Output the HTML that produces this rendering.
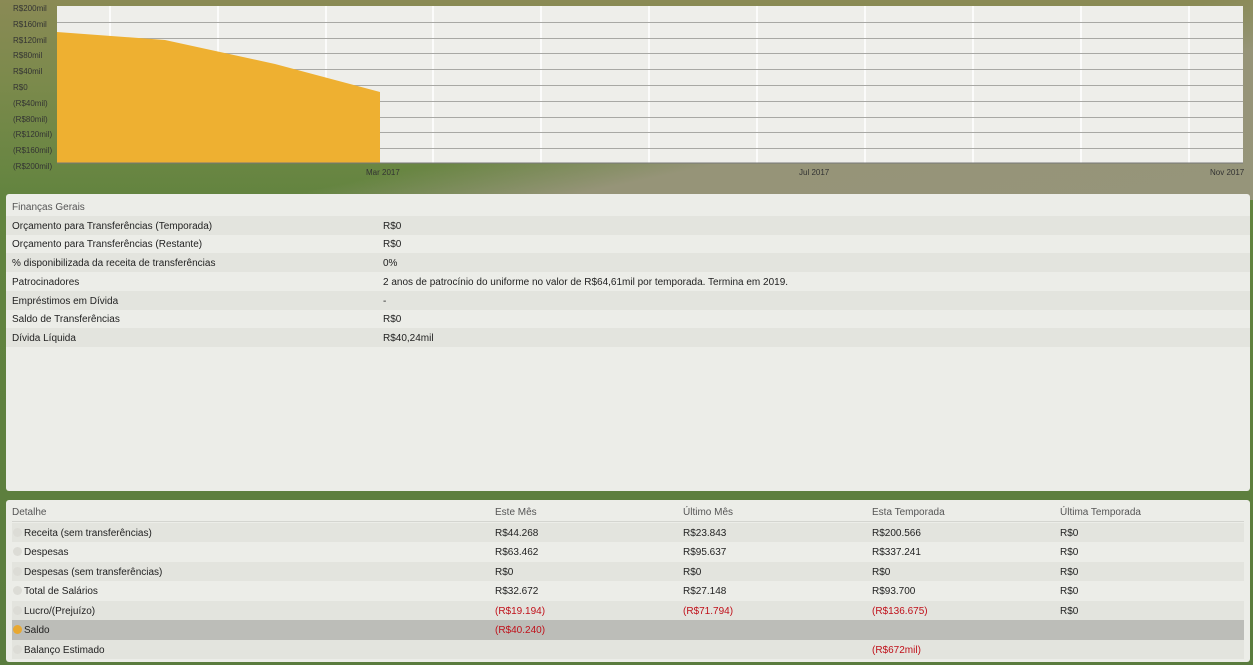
<!DOCTYPE html><html><head><meta charset="utf-8"><style>
body{margin:0;width:1253px;height:665px;overflow:hidden;font-family:"Liberation Sans",sans-serif;font-size:10px;color:#222;
background:linear-gradient(180deg,#8a8a55 0%,#7c8a4c 12%,#62843f 30%,#5a7c3e 100%);position:relative}
.bg2{position:absolute;left:0;top:0;width:1253px;height:200px;background:linear-gradient(168deg,rgba(150,148,120,0) 0%,rgba(150,148,120,0) 55%,rgba(150,148,120,1) 68%,#96957a 100%)}
.p{position:absolute;left:6px;width:1244px;background:#ecede8;border-radius:3px}
.r{position:absolute;left:0;right:0;height:19px;line-height:21px}
.r.s{background:#e3e4de}
.r span{position:absolute;top:0}
.h{color:#555}
.red{color:#c0101a}
.ico{position:absolute;left:1px;top:5px;width:9px;height:9px;border-radius:50%;background:#dcdcd6}
</style></head><body>
<div class="bg2"></div>
<svg style="position:absolute;left:0;top:0" width="1253" height="180">
<rect x="57" y="6" width="1186" height="157" fill="#eeeeea"/>
<g stroke="#fff" stroke-width="1.5">
<line x1="110" y1="6" x2="110" y2="163"/><line x1="218" y1="6" x2="218" y2="163"/><line x1="326" y1="6" x2="326" y2="163"/><line x1="433" y1="6" x2="433" y2="163"/><line x1="541" y1="6" x2="541" y2="163"/><line x1="649" y1="6" x2="649" y2="163"/><line x1="757" y1="6" x2="757" y2="163"/><line x1="865" y1="6" x2="865" y2="163"/><line x1="973" y1="6" x2="973" y2="163"/><line x1="1081" y1="6" x2="1081" y2="163"/><line x1="1189" y1="6" x2="1189" y2="163"/></g>
<g stroke="#a8a8a4" stroke-width="1">
<line x1="57" y1="22.5" x2="1243" y2="22.5"/><line x1="57" y1="38.5" x2="1243" y2="38.5"/><line x1="57" y1="53.5" x2="1243" y2="53.5"/><line x1="57" y1="69.5" x2="1243" y2="69.5"/><line x1="57" y1="85.5" x2="1243" y2="85.5"/><line x1="57" y1="101.5" x2="1243" y2="101.5"/><line x1="57" y1="117.5" x2="1243" y2="117.5"/><line x1="57" y1="132.5" x2="1243" y2="132.5"/><line x1="57" y1="148.5" x2="1243" y2="148.5"/></g>
<polygon points="57,32 165,40 275,64 380,92 380,163 57,163" fill="#eeb031"/>
<line x1="57" y1="163" x2="1243" y2="163" stroke="#777"/>
<g font-size="8" fill="#333" font-family="Liberation Sans">
<text x="13" y="11">R$200mil</text><text x="13" y="27">R$160mil</text><text x="13" y="43">R$120mil</text><text x="13" y="58">R$80mil</text><text x="13" y="74">R$40mil</text><text x="13" y="90">R$0</text><text x="13" y="106">(R$40mil)</text><text x="13" y="122">(R$80mil)</text><text x="13" y="137">(R$120mil)</text><text x="13" y="153">(R$160mil)</text><text x="13" y="169">(R$200mil)</text>
<text x="366" y="175">Mar 2017</text><text x="799" y="175">Jul 2017</text><text x="1210" y="175">Nov 2017</text></g>
</svg>
<div class="p" style="top:194px;height:297px">
<div class="r h" style="top:3px"><span style="left:6px">Finanças Gerais</span></div>
<div class="r s" style="top:22px"><span style="left:6px">Orçamento para Transferências (Temporada)</span><span style="left:377px">R$0</span></div>
<div class="r" style="top:40px"><span style="left:6px">Orçamento para Transferências (Restante)</span><span style="left:377px">R$0</span></div>
<div class="r s" style="top:59px"><span style="left:6px">% disponibilizada da receita de transferências</span><span style="left:377px">0%</span></div>
<div class="r" style="top:78px"><span style="left:6px">Patrocinadores</span><span style="left:377px">2 anos de patrocínio do uniforme no valor de R$64,61mil por temporada. Termina em 2019.</span></div>
<div class="r s" style="top:97px"><span style="left:6px">Empréstimos em Dívida</span><span style="left:377px">-</span></div>
<div class="r" style="top:115px"><span style="left:6px">Saldo de Transferências</span><span style="left:377px">R$0</span></div>
<div class="r s" style="top:134px"><span style="left:6px">Dívida Líquida</span><span style="left:377px">R$40,24mil</span></div>
</div>
<div class="p" style="top:500px;height:162px">
<div class="r h" style="top:2px;border-bottom:1px solid #d4d5d0;left:6px;right:6px"><span style="left:0">Detalhe</span><span style="left:483px">Este Mês</span><span style="left:671px">Último Mês</span><span style="left:860px">Esta Temporada</span><span style="left:1048px">Última Temporada</span></div>
<div class="r s" style="top:23px;left:6px;right:6px"><i class="ico"></i><span style="left:12px">Receita (sem transferências)</span><span style="left:483px">R$44.268</span><span style="left:671px">R$23.843</span><span style="left:860px">R$200.566</span><span style="left:1048px">R$0</span></div>
<div class="r" style="top:42px;left:6px;right:6px"><i class="ico"></i><span style="left:12px">Despesas</span><span style="left:483px">R$63.462</span><span style="left:671px">R$95.637</span><span style="left:860px">R$337.241</span><span style="left:1048px">R$0</span></div>
<div class="r s" style="top:62px;left:6px;right:6px"><i class="ico"></i><span style="left:12px">Despesas (sem transferências)</span><span style="left:483px">R$0</span><span style="left:671px">R$0</span><span style="left:860px">R$0</span><span style="left:1048px">R$0</span></div>
<div class="r" style="top:81px;left:6px;right:6px"><i class="ico"></i><span style="left:12px">Total de Salários</span><span style="left:483px">R$32.672</span><span style="left:671px">R$27.148</span><span style="left:860px">R$93.700</span><span style="left:1048px">R$0</span></div>
<div class="r s" style="top:101px;left:6px;right:6px"><i class="ico"></i><span style="left:12px">Lucro/(Prejuízo)</span><span class="red" style="left:483px">(R$19.194)</span><span class="red" style="left:671px">(R$71.794)</span><span class="red" style="left:860px">(R$136.675)</span><span style="left:1048px">R$0</span></div>
<div class="r" style="top:120px;height:20px;left:6px;right:6px;background:#bcbdb8"><i class="ico" style="background:#e8a830"></i><span style="left:12px">Saldo</span><span class="red" style="left:483px">(R$40.240)</span></div>
<div class="r s" style="top:140px;left:6px;right:6px"><i class="ico"></i><span style="left:12px">Balanço Estimado</span><span class="red" style="left:860px">(R$672mil)</span></div>
</div>
</body></html>
